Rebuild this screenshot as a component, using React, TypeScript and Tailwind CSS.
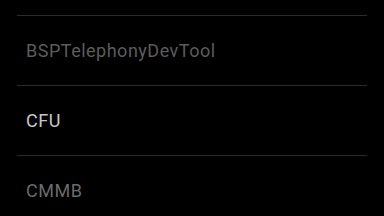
import React from "react";

const items = [
  { label: "BSPTelephonyDevTool", color: "text-[#5c5c5c]" },
  { label: "CFU", color: "text-[#c8c8c8]" },
  { label: "CMMB", color: "text-[#6a6a6a]" },
];

export default function App() {
  return (
    <div className="w-[384px] h-[216px] bg-black overflow-hidden" style={{ fontFamily: "Roboto, 'Liberation Sans', sans-serif" }}>
      <div className="pt-[15px] mx-[17px]">
        {items.map((it) => (
          <div key={it.label} className="h-[70px] border-t border-[#2a2a2a] flex items-center pl-[9px]">
            <span className={`text-[18px] tracking-[0.5px] ${it.color}`}>{it.label}</span>
          </div>
        ))}
      </div>
    </div>
  );
}
